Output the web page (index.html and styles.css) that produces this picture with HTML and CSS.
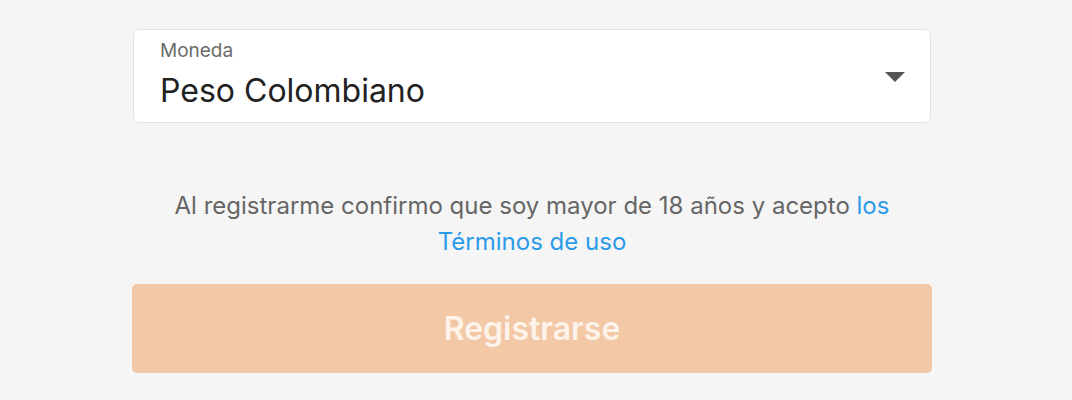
FILE: index.html
```html
<!DOCTYPE html>
<html lang="es">
<head>
  <meta charset="UTF-8" />
  <meta name="viewport" content="width=device-width, initial-scale=1.0"/>
  <title>Registro</title>
  <link rel="stylesheet" href="styles.css">
</head>
<body>
  <div class="form">
    <div class="select">
      <div class="select-text">
        <div class="select-label">Moneda</div>
        <div class="select-value">Peso Colombiano</div>
      </div>
      <svg class="select-arrow" width="20" height="10" viewBox="0 0 20 10">
        <path d="M0 0 L20 0 L10 10 Z" fill="#555"/>
      </svg>
    </div>

    <p class="terms">Al registrarme confirmo que soy mayor de 18 años y acepto <a href="#">los Términos de uso</a></p>

    <button class="submit" disabled>Registrarse</button>
  </div>
</body>
</html>
```

FILE: styles.css
```css
body {
  margin: 0;
  background: #f5f5f5;
  font-family: Inter, "Noto Sans", sans-serif;
}
.form {
  width: 800px;
  margin-left: 132px;
  padding-top: 29px;
}
.select {
  display: flex;
  justify-content: space-between;
  height: 94px;
  box-sizing: border-box;
  margin-left: 1px;
  width: 798px;
  padding: 10px 25px 0 26px;
  background: #fff;
  border: 1px solid #e2e2e2;
  border-radius: 6px;
}
.select-label {
  font-size: 19px;
  line-height: 22px;
  color: #6b6b6b;
}
.select-value {
  font-size: 32px;
  line-height: 36px;
  color: #222;
  margin-top: 11px;
}
.select-arrow {
  margin-top: 32px;
}
.terms {
  width: 740px;
  margin: 65px auto 0;
  text-align: center;
  font-size: 24px;
  line-height: 36px;
  color: #666;
}
.terms a {
  color: #2b9be9;
  text-decoration: none;
}
.submit {
  display: block;
  width: 800px;
  height: 89px;
  margin-top: 24px;
  border: none;
  border-radius: 5px;
  background: #f2c8a6;
  color: #fdf3ea;
  font-family: Inter, "Noto Sans", sans-serif;
  font-size: 32px;
  font-weight: 600;
}
```
